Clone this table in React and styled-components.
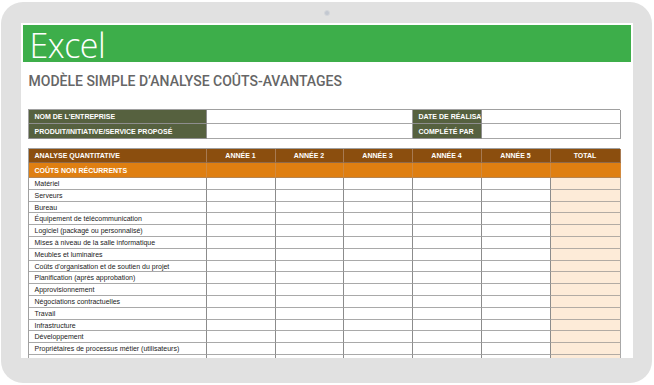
import React from 'react';
import styled, { createGlobalStyle } from 'styled-components';

const Global = createGlobalStyle`
  html, body { margin: 0; padding: 0; background: #ffffff; }
  body { font-family: "Liberation Sans", Arial, sans-serif; }
  * { box-sizing: border-box; }
`;

const Device = styled.div`
  width: 651px;
  height: 381px;
  margin: 2px 0 0 1px;
  background: #e1e1e1;
  border-radius: 22px;
  display: flex;
  flex-direction: column;
  align-items: center;
  padding-top: 8px;
`;

const Camera = styled.div`
  width: 6px;
  height: 6px;
  border-radius: 50%;
  background: #c3c8d1;
  border: 1px solid #d4d6da;
  margin-bottom: 7px;
`;

const Screen = styled.div`
  width: 612px;
  height: 335px;
  background: #ffffff;
  padding: 2px 2px 0;
  overflow: hidden;
  display: flex;
  flex-direction: column;
`;

const Banner = styled.div`
  height: 37px;
  flex: none;
  background: #3dae4a;
  color: #ffffff;
  font-family: "Open Sans", "Noto Sans", sans-serif;
  font-weight: 300;
  font-size: 34px;
  line-height: 34px;
  padding: 3px 0 0 7px;
  letter-spacing: -0.5px;
`;

const Title = styled.h1`
  margin: 10px 0 0 6px;
  font-family: Roboto, "Liberation Sans", sans-serif;
  font-weight: 500;
  font-size: 14px;
  line-height: 18px;
  color: #666666;
`;

const Sheet = styled.div`
  width: 592px;
  margin-left: 5px;
  margin-top: ${p => p.$gap}px;
  border-top: 1px solid #a0a0a0;
  border-left: 1px solid #a0a0a0;
  flex: none;
`;

const InfoRow = styled.div`
  display: grid;
  grid-template-columns: 178px 206px 69px 139px;
  height: ${p => p.$h}px;
`;

const GridRow = styled.div`
  display: grid;
  grid-template-columns: 178px 69px 68px 69px 69px 69px 70px;
  height: ${p => p.$h}px;
`;

const kinds = {
  label: { bg: '#56613f', color: '#ffffff', weight: 700, right: '#8e8e8e', bottom: '#8e8e8e' },
  value: { bg: '#ffffff', color: '#222', weight: 400, right: '#9a9a9a', bottom: '#a6a6a6' },
  head: { bg: '#8b4e0e', color: '#ffffff', weight: 700, right: '#a77a52', bottom: '#8f6a4a' },
  section: { bg: '#df7f11', color: '#ffffff', weight: 700, right: '#d28a3e', bottom: '#b7844f' },
  body: { bg: '#ffffff', color: '#1a1a1a', weight: 400, right: '#8c8c8c', bottom: '#a9a9a9' },
  total: { bg: '#fdebd8', color: '#1a1a1a', weight: 400, right: '#a8a8a8', bottom: '#b2aba4' },
};

const Cell = styled.div`
  background: ${p => kinds[p.$kind].bg};
  color: ${p => kinds[p.$kind].color};
  font-weight: ${p => kinds[p.$kind].weight};
  border-right: 1px solid ${p => kinds[p.$kind].right};
  border-bottom: 1px solid ${p => kinds[p.$kind].bottom};
  font-size: 7px;
  display: flex;
  align-items: center;
  justify-content: ${p => (p.$center ? 'center' : 'flex-start')};
  padding-left: ${p => (p.$center ? 0 : 6)}px;
  white-space: nowrap;
  overflow: hidden;
`;

const years = ['ANNÉE 1', 'ANNÉE 2', 'ANNÉE 3', 'ANNÉE 4', 'ANNÉE 5', 'TOTAL'];

const items = [
  'Matériel',
  'Serveurs',
  'Bureau',
  'Équipement de télécommunication',
  'Logiciel (packagé ou personnalisé)',
  'Mises à niveau de la salle informatique',
  'Meubles et luminaires',
  "Coûts d'organisation et de soutien du projet",
  'Planification (après approbation)',
  'Approvisionnement',
  'Négociations contractuelles',
  'Travail',
  'Infrastructure',
  'Développement',
  'Propriétaires de processus métier (utilisateurs)',
  '',
];

const PITCH = 11.8;
const rowHeight = i => Math.round(PITCH * (i + 1)) - Math.round(PITCH * i);

export default function App() {
  return (
    <>
      <Global />
      <Device>
        <Camera />
        <Screen>
          <Banner>Excel</Banner>
          <Title>MODÈLE SIMPLE D’ANALYSE COÛTS-AVANTAGES</Title>

          <Sheet $gap={19}>
            <InfoRow $h={14}>
              <Cell $kind="label">NOM DE L'ENTREPRISE</Cell>
              <Cell $kind="value" />
              <Cell $kind="label">DATE DE RÉALISATION</Cell>
              <Cell $kind="value" />
            </InfoRow>
            <InfoRow $h={15}>
              <Cell $kind="label">PRODUIT/INITIATIVE/SERVICE PROPOSÉ</Cell>
              <Cell $kind="value" />
              <Cell $kind="label">COMPLÉTÉ PAR</Cell>
              <Cell $kind="value" />
            </InfoRow>
          </Sheet>

          <Sheet $gap={9}>
            <GridRow $h={14}>
              <Cell $kind="head">ANALYSE QUANTITATIVE</Cell>
              {years.map(y => (
                <Cell key={y} $kind="head" $center>{y}</Cell>
              ))}
            </GridRow>
            <GridRow $h={15}>
              <Cell $kind="section">COÛTS NON RÉCURRENTS</Cell>
              {years.map(y => (
                <Cell key={y} $kind="section" />
              ))}
            </GridRow>
            {items.map((it, i) => (
              <GridRow key={i} $h={rowHeight(i)}>
                <Cell $kind="body">{it}</Cell>
                {years.map((y, j) => (
                  <Cell key={y} $kind={j === 5 ? 'total' : 'body'} />
                ))}
              </GridRow>
            ))}
          </Sheet>
        </Screen>
      </Device>
    </>
  );
}
